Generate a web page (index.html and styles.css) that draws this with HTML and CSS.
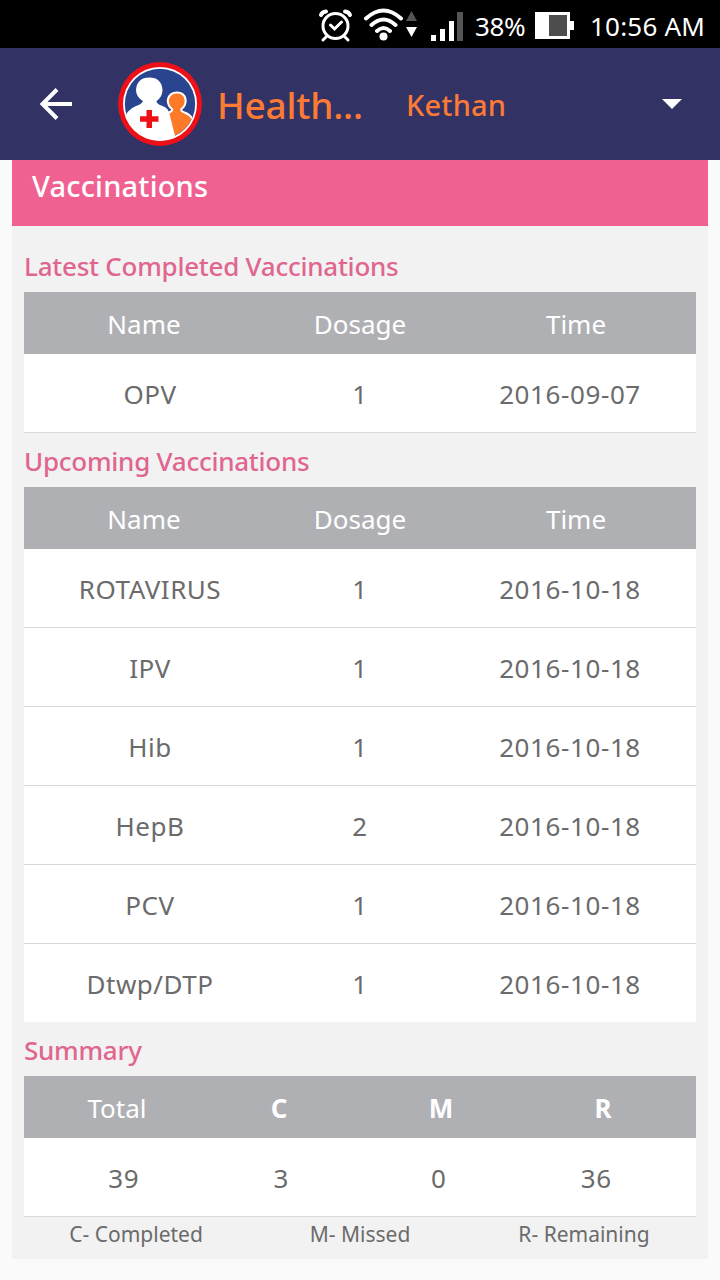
FILE: index.html
```html
<!DOCTYPE html>
<html lang="en">
<head>
  <meta charset="UTF-8" />
  <meta name="viewport" content="width=device-width, initial-scale=1" />
  <title>Vaccinations</title>
  <link rel="stylesheet" href="styles.css">
</head>

<body>
  <div class="status-bar">
    <svg class="status-icons" width="150" height="48" viewBox="316 0 150 48">
      <!-- alarm -->
      <g fill="none" stroke="#fff" stroke-width="3" stroke-linecap="round">
        <circle cx="335.5" cy="26" r="12.5" />
        <path d="M330.500 25l4 4 7-7M326 37l-3 3M345 37l3 3" />
        <path d="M321 15q1-3 5-3.500M350 15q-1-3-5-3.500" stroke-width="4" />
      </g>
      <!-- wifi -->
      <g fill="none" stroke="#fff" stroke-width="4" stroke-linecap="round">
        <path d="M366 18.500q17.500-16 35 0M371.500 25q12-11 24 0M377 31q6.500-6 13 0" />
      </g>
      <circle cx="383.500" cy="36.500" r="4" fill="#fff" />
      <path d="M406 21l5.500-10 5.500 10z" fill="#555" />
      <path d="M406 27h11l-5.500 10z" fill="#fff" />
      <!-- signal -->
      <path d="M431 35h5v6h-5zM440 29h5v12h-5zM449 21h5v20h-5z" fill="#fff" />
      <path d="M457 12h6v29h-6z" fill="#555" />
    </svg>
    <span class="percent">38%</span>
    <svg class="battery" width="40" height="28" viewBox="0 0 40 28">
      <path d="M0 0h35v9h4v9h-4v9H0z" fill="#fff" />
      <path d="M14 3h18v21H14z" fill="#4d4d4d" />
    </svg>
    <span class="clock">10:56 AM</span>
  </div>

  <header class="app-bar">
    <svg class="back" width="34" height="34" viewBox="0 0 34 34">
      <path d="M33 17H4M18 2.500L3.500 17 18 31.500" fill="none" stroke="#fff" stroke-width="4" />
    </svg>
    <svg class="logo" width="84" height="84" viewBox="0 0 84 84">
      <defs>
        <clipPath id="badge"><circle cx="42" cy="42" r="36.500" /></clipPath>
        <clipPath id="inner"><circle cx="42" cy="42" r="35" /></clipPath>
      </defs>
      <circle cx="42" cy="42" r="42" fill="#ee1017" />
      <circle cx="42" cy="42" r="37" fill="#fff" />
      <circle cx="42" cy="42" r="35.200" fill="#2a458f" />
      <g clip-path="url(#inner)">
        <path d="M50 84V51q5-2 4-4-5-4-4-10 2-6.500 9-6.500t8.500 6.500q1 6-4 10-1 2 3 3.500 6 2 9 8v26z" fill="#ff7a28" stroke="#fff" stroke-width="2" />
      </g>
      <g clip-path="url(#badge)">
        <path d="M4 84V64q3-16 14-20 6-2 7-5-7-4-7-11 1-12.500 13.300-12.500T44.500 28q0 7-6 11 0 3 6 5 6 2 7 8l8 32z" fill="#fff" />
      </g>
      <path d="M28.500 48h5.500v6.200h6.500v5.600H34V66h-5.500v-6.200H22v-5.600h6.500z" fill="#ee1017" />
    </svg>
    <h1>Health...</h1>
    <span class="profile">Kethan</span>
    <span class="caret"></span>
  </header>

  <main class="card">
    <h2>Vaccinations</h2>

    <h3 class="first">Latest Completed Vaccinations</h3>
    <div class="table">
      <div class="head"><span>Name</span><span>Dosage</span><span>Time</span></div>
      <div class="row"><span class="name">OPV</span><span>1</span><span>2016-09-07</span></div>
    </div>

    <h3>Upcoming Vaccinations</h3>
    <div class="table upcoming">
      <div class="head"><span>Name</span><span>Dosage</span><span>Time</span></div>
      <div class="row"><span class="name">ROTAVIRUS</span><span>1</span><span>2016-10-18</span></div>
      <div class="row"><span class="name">IPV</span><span>1</span><span>2016-10-18</span></div>
      <div class="row"><span class="name">Hib</span><span>1</span><span>2016-10-18</span></div>
      <div class="row"><span class="name">HepB</span><span>2</span><span>2016-10-18</span></div>
      <div class="row"><span class="name">PCV</span><span>1</span><span>2016-10-18</span></div>
      <div class="row"><span class="name">Dtwp/DTP</span><span>1</span><span>2016-10-18</span></div>
    </div>

    <h3>Summary</h3>
    <div class="table">
      <div class="head"><span>Total</span><span class="bold">C</span><span class="bold">M</span><span class="bold">R</span></div>
      <div class="row"><span>39</span><span>3</span><span>0</span><span>36</span></div>
    </div>
    <div class="legend"><span>C- Completed</span><span>M- Missed</span><span>R- Remaining</span></div>
  </main>
</body>
</html>
```
FILE: styles.css
```css
* {
  box-sizing: border-box;
}

body {
  font-family: 'Noto Sans', sans-serif;
  margin: 0;
  background-color: #fafafa;
  color: #6b6b6b;
}

/* === Phone status bar === */
.status-bar {
  display: flex;
  align-items: center;
  height: 48px;
  padding-left: 316px;
  background-color: #000;
  color: #fff;
  font-size: 26px;
  white-space: nowrap;
}

.percent {
  width: 52px;
  margin: 4px 8px 0 9px;
  letter-spacing: -0.4px;
}

.battery {
  margin-top: 3px;
}

.clock {
  margin: 4px 0 0 15px;
  letter-spacing: 0.2px;
}

/* === App bar === */
.app-bar {
  display: flex;
  align-items: center;
  height: 112px;
  padding: 0 38px 0 39px;
  background-color: #323264;
  color: #fb7a35;
}

.logo {
  margin-left: 45px;
}

.app-bar h1 {
  width: 189px;
  margin: 0 0 0 15px;
  font-size: 37px;
  font-weight: 500;
  letter-spacing: -0.2px;
}

.profile {
  font-size: 29px;
  font-weight: 500;
  letter-spacing: 0.2px;
}

.caret {
  margin-left: auto;
  border: 10px solid transparent;
  border-top-color: #fff;
  border-bottom: 0;
}

/* === Card === */
.card {
  height: 1099px;
  margin: 0 12px;
  background-color: #f2f2f2;
}

.card h2 {
  height: 66px;
  margin: 0;
  padding-left: 20px;
  background-color: #f06191;
  color: #fff;
  font-size: 29px;
  font-weight: 500;
  line-height: 52px;
  letter-spacing: 0.2px;
}

.card h3 {
  height: 54px;
  margin: 0;
  padding-left: 12px;
  color: #e0668f;
  font-size: 26px;
  font-weight: 500;
  line-height: 57px;
  letter-spacing: -0.25px;
}

.card h3.first {
  height: 66px;
  line-height: 81px;
}

/* === Tables === */
.table {
  margin: 0 12px;
  font-size: 26px;
}

.head,
.row,
.legend {
  display: flex;
  text-align: center;
}

.head span,
.row span,
.legend span {
  flex: 1 1 0;
}

.head {
  height: 62px;
  padding: 0 12px;
  background-color: #afb0b4;
  color: #fff;
  line-height: 64px;
}

.head .bold {
  font-weight: bold;
}

.row {
  height: 79px;
  padding: 0 21px;
  background-color: #fff;
  border-bottom: 1px solid #d9d9d9;
  line-height: 80px;
  letter-spacing: 0.6px;
}

.row .name {
  letter-spacing: 0.5px;
}

.upcoming .row:last-child {
  height: 78px;
  border-bottom: 0;
}

.legend {
  margin: 0 12px;
  font-size: 21px;
  line-height: 34px;
}
```
